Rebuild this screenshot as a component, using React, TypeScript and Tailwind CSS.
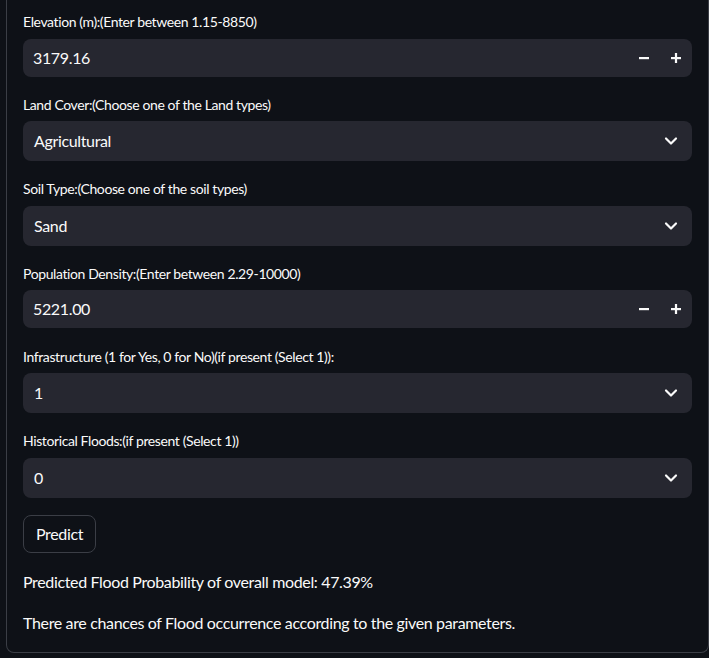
import React from 'react'

const font = { fontFamily: 'Lato, "Noto Sans", sans-serif' }

function Label({ text }: { text: string }) {
  return (
    <div className="mb-1 flex min-h-[24.6px] items-center text-sm tracking-[-0.028em] text-[#fafafa]">
      {text}
    </div>
  )
}

function NumberField({ label, value }: { label: string; value: string }) {
  return (
    <div>
      <Label text={label} />
      <div className="flex h-[38px] items-center rounded-lg bg-[#262730]">
        <div className="flex-1 pl-[10px] text-base text-[#fafafa]">{value}</div>
        <button className="flex h-full w-8 items-center justify-center">
          <svg width="12" height="12" viewBox="0 0 12 12">
            <rect x="1" y="5" width="10" height="2.2" fill="#fafafa" />
          </svg>
        </button>
        <button className="flex h-full w-8 items-center justify-center">
          <svg width="12" height="12" viewBox="0 0 12 12">
            <rect x="1" y="5" width="10" height="2.2" fill="#fafafa" />
            <rect x="4.9" y="1" width="2.2" height="10" fill="#fafafa" />
          </svg>
        </button>
      </div>
    </div>
  )
}

function SelectField({ label, value }: { label: string; value: string }) {
  return (
    <div>
      <Label text={label} />
      <div className="flex h-10 items-center rounded-lg bg-[#262730] pr-[14px]">
        <div className="flex-1 pl-[11px] text-base text-[#fafafa]">{value}</div>
        <svg width="14" height="10" viewBox="0 0 14 10">
          <path d="M2 2.5 L7 7.5 L12 2.5" stroke="#fafafa" strokeWidth="2.2" fill="none" strokeLinecap="round" strokeLinejoin="round" />
        </svg>
      </div>
    </div>
  )
}

export default function App() {
  return (
    <div className="min-h-[658px] bg-[#0e1117] pb-[5px] tracking-[-0.022em]" style={font}>
      <div className="ml-[6px] rounded-b-lg border-x border-b border-[#3b3e46] px-4 pb-4 pt-[10px]">
        <div className="flex flex-col gap-4">
          <NumberField label="Elevation (m):(Enter between 1.15-8850)" value="3179.16" />
          <SelectField label="Land Cover:(Choose one of the Land types)" value="Agricultural" />
          <SelectField label="Soil Type:(Choose one of the soil types)" value="Sand" />
          <NumberField label="Population Density:(Enter between 2.29-10000)" value="5221.00" />
          <SelectField label="Infrastructure (1 for Yes, 0 for No)(if present (Select 1)):" value="1" />
          <SelectField label="Historical Floods:(if present (Select 1))" value="0" />
          <div className="pt-px">
            <button className="h-[38px] rounded-lg border border-[#3b3e46] bg-[#0e1117] px-3 text-base text-[#fafafa]">
              Predict
            </button>
          </div>
          <div className="flex flex-col gap-4 text-base leading-[1.6] text-[#fafafa]">
            <p>Predicted Flood Probability of overall model: 47.39%</p>
            <p>There are chances of Flood occurrence according to the given parameters.</p>
          </div>
        </div>
      </div>
    </div>
  )
}
